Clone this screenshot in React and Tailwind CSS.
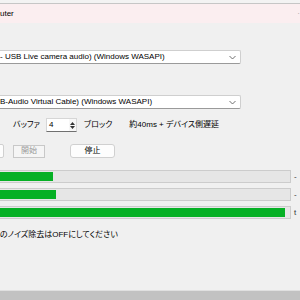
import React from "react";

const font = { fontFamily: '"Liberation Sans", "Noto Sans CJK JP", sans-serif' };

function Chevron() {
  return (
    <svg width="7" height="5" viewBox="0 0 7 5" className="shrink-0">
      <path d="M0.5 1 L3.5 4 L6.5 1" fill="none" stroke="#606060" strokeWidth="0.9" />
    </svg>
  );
}

function Combo({ text }) {
  return (
    <div className="-ml-[6px] w-[247px] h-[14px] bg-white border border-[#cfcfcf] border-b-[#9a9a9a] rounded-[2px] flex items-center pl-[5px] pr-[4px]">
      <span className="flex-1 whitespace-nowrap leading-none">{text}</span>
      <Chevron />
    </div>
  );
}

function Bar({ pct, label }) {
  return (
    <div className="flex items-center h-[13px]">
      <div className="-ml-[4px] w-[295px] h-full bg-[#e6e6e6] border border-[#cccccc] p-[1px] flex">
        <div className="h-full bg-[#06b025]" style={{ width: pct + "%" }} />
      </div>
      <span className="ml-[3px] text-[8px] leading-none text-[#333]">{label}</span>
    </div>
  );
}

export default function App() {
  return (
    <div
      className="w-[300px] h-[300px] overflow-hidden bg-[#f0f0f0] flex flex-col text-[8px] text-black [font-feature-settings:'palt']"
      style={font}
    >
      <div className="h-[4px] bg-[#f3f3f3] border-b border-[#c6c6c6] shrink-0" />
      <div className="h-[19px] bg-[#fbeef0] flex items-center justify-between shrink-0">
        <span className="leading-none">uter</span>
        <span className="text-[#a0a0a0] leading-none">·</span>
      </div>

      <div className="mt-[27px]">
        <Combo text="- USB Live camera audio) (Windows WASAPI)" />
      </div>

      <div className="mt-[31px]">
        <Combo text="B-Audio Virtual Cable) (Windows WASAPI)" />
      </div>

      <div className="mt-[9px] flex items-center h-[14px]">
        <span className="ml-[13px] leading-none">バッファ</span>
        <div className="ml-[6px] w-[31px] h-[14px] bg-white border border-[#d6d6d6] border-b-[#707070] flex items-center">
          <span className="ml-[2px] flex-1 leading-none">4</span>
          <div className="w-[7px] h-full flex flex-col items-center justify-center gap-[1px] bg-[#f7f7f7]">
            <svg width="5" height="3" viewBox="0 0 5 3"><path d="M0 3 L2.5 0 L5 3Z" fill="#333" /></svg>
            <svg width="5" height="3" viewBox="0 0 5 3"><path d="M0 0 L2.5 3 L5 0Z" fill="#333" /></svg>
          </div>
        </div>
        <span className="ml-[7px] leading-none">ブロック</span>
        <span className="ml-[17px] leading-none">約40ms + デバイス側遅延</span>
      </div>

      <div className="mt-[12px] flex items-center h-[14px]">
        <div className="-ml-[20px] w-[24px] h-[14px] bg-[#fdfdfd] border border-[#d0d0d0] rounded-[2px]" />
        <div className="ml-[9px] w-[32px] h-[13px] bg-[#f5f5f5] border border-[#c8c8c8] flex items-center justify-center text-[#9a9a9a] leading-none">
          開始
        </div>
        <div className="ml-[25px] w-[45px] h-[14px] bg-[#fdfdfd] border border-[#d0d0d0] rounded-[3px] flex items-center justify-center leading-none">
          停止
        </div>
      </div>

      <div className="mt-[12px] flex flex-col gap-[5px]">
        <Bar pct={19} label="-" />
        <Bar pct={20} label="-" />
        <Bar pct={98.5} label="t" />
      </div>

      <div className="mt-[12px] leading-none whitespace-nowrap">のノイズ除去はOFFにしてください</div>

      <div className="mt-auto h-[10px] border-t border-[#e0e0e0] bg-[#c2c2c2] shrink-0" />
    </div>
  );
}
